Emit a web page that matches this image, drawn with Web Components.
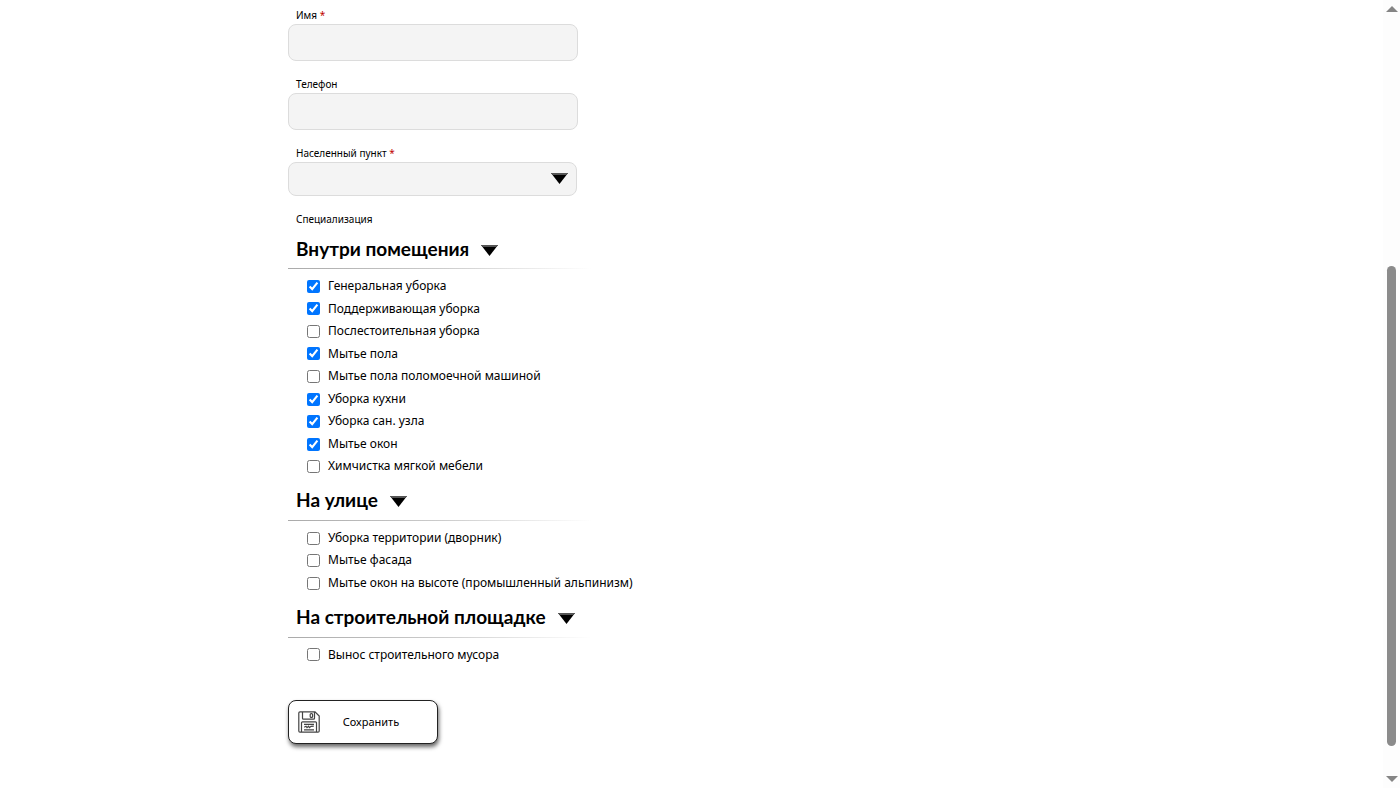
<!DOCTYPE html>
<html lang="ru">
<head>
<meta charset="utf-8">
<title>Анкета</title>
<style>
  html, body { margin: 0; height: 100%; background: #fff; }
  body { font-family: "Noto Sans", "Open Sans", sans-serif; color: #000; overflow: hidden; }
</style>
</head>
<body>
<app-page>
  <profile-form>
    <text-field required>Имя</text-field>
    <text-field>Телефон</text-field>
    <select-field required>Населенный пункт</select-field>
    <field-caption>Специализация</field-caption>
    <check-group heading="Внутри помещения">
      <check-item checked>Генеральная уборка</check-item>
      <check-item checked>Поддерживающая уборка</check-item>
      <check-item>Послестоительная уборка</check-item>
      <check-item checked>Мытье пола</check-item>
      <check-item>Мытье пола поломоечной машиной</check-item>
      <check-item checked>Уборка кухни</check-item>
      <check-item checked>Уборка сан. узла</check-item>
      <check-item checked>Мытье окон</check-item>
      <check-item>Химчистка мягкой мебели</check-item>
    </check-group>
    <check-group heading="На улице">
      <check-item>Уборка территории (дворник)</check-item>
      <check-item>Мытье фасада</check-item>
      <check-item>Мытье окон на высоте (промышленный альпинизм)</check-item>
    </check-group>
    <check-group heading="На строительной площадке">
      <check-item>Вынос строительного мусора</check-item>
    </check-group>
    <save-button>Сохранить</save-button>
  </profile-form>
  <scroll-rail slot="rail"></scroll-rail>
</app-page>

<script>
const define = (name, html, setup) => {
  const template = document.createElement('template');
  template.innerHTML = html;
  customElements.define(name, class extends HTMLElement {
    constructor() {
      super();
      this.attachShadow({ mode: 'open' }).append(template.content.cloneNode(true));
    }
    connectedCallback() { if (setup) setup(this, this.shadowRoot); }
  });
};

const arrow = `<svg class="arrow" width="17" height="11" viewBox="0 0 18 11" preserveAspectRatio="none" aria-hidden="true">
  <path d="M0 0H18L9 11Z" fill="#000"/><path d="M0 0H18L16 2H2Z" fill="#555"/></svg>`;

const markRequired = (host, root) => {
  root.querySelector('.star').hidden = !host.hasAttribute('required');
  root.querySelector('.control').required = host.hasAttribute('required');
};

const fieldStyle = `
  :host { display: block; }
  label { display: block; padding: 0 8px; font-size: 10px; line-height: 18px; }
  .star { color: #c00000; }
  .control { display: block; box-sizing: border-box; width: 100%; margin: 0; padding: 0 12px;
    border: 1px solid #dcdcdc; border-radius: 8px; background: #f4f4f4; font: inherit; font-size: 12px; }`;

define('app-page', `
  <style>
    :host { display: flex; height: 100vh; overflow: hidden; }
    main { flex: 1; min-width: 0; padding: 6px 20px 0 288px; }
  </style>
  <main><slot></slot></main>
  <slot name="rail"></slot>`);

define('profile-form', `
  <style>
    :host { display: block; max-width: 400px; }
    ::slotted(text-field) { margin-bottom: 14px; max-width: 290px; }
    ::slotted(select-field) { max-width: 289px; }
    ::slotted(field-caption) { margin-top: 14px; }
    ::slotted(save-button) { margin-top: 32px; }
  </style>
  <slot></slot>`);

define('text-field', `
  <style>${fieldStyle} .control { height: 37px; }</style>
  <label for="field"><slot></slot> <span class="star">*</span></label>
  <input class="control" id="field" type="text">`, markRequired);

define('select-field', `
  <style>${fieldStyle}
    .box { display: grid; align-items: center; }
    .box > * { grid-area: 1 / 1; }
    .control { height: 34px; appearance: none; }
    .arrow { justify-self: end; margin: 0 9px 2px 0; pointer-events: none; }
  </style>
  <label for="field"><slot></slot> <span class="star">*</span></label>
  <div class="box">
    <select class="control" id="field"><option value=""></option></select>
    ${arrow}
  </div>`, markRequired);

define('field-caption', `
  <style>:host { display: block; padding: 0 8px; font-size: 10px; line-height: 18px; }</style>
  <slot></slot>`);

define('check-group', `
  <style>
    :host { display: block; }
    h2 { margin: 0; max-width: 310px; padding-bottom: 1px;
      background: linear-gradient(90deg, #aaa, #ccc 50%, #fff 98%) bottom / 100% 1px no-repeat; }
    button { display: flex; align-items: center; gap: 12px; height: 40px; padding: 0 8px; border: 0;
      background: none; color: #000; font: 700 19px Lato, "Noto Sans", sans-serif; white-space: nowrap; cursor: pointer; }
    .arrow { margin-top: 4px; }
    .items { padding: 6px 0 2px 19px; }
    .items[hidden] { display: none; }
  </style>
  <h2><button type="button" aria-expanded="true"><span></span>${arrow}</button></h2>
  <div class="items" role="group"><slot></slot></div>`, (host, root) => {
    const button = root.querySelector('button');
    const items = root.querySelector('.items');
    root.querySelector('span').textContent = host.getAttribute('heading');
    items.setAttribute('aria-label', host.getAttribute('heading'));
    button.onclick = () => {
      items.hidden = !items.hidden;
      button.setAttribute('aria-expanded', String(!items.hidden));
    };
  });

define('check-item', `
  <style>
    :host { display: block; font-size: 12px; line-height: 1.88; white-space: nowrap; }
    label { display: flex; align-items: center; gap: 8px; }
    input { width: 13px; height: 13px; margin: 0; }
  </style>
  <label><input type="checkbox"><span><slot></slot></span></label>`, (host, root) => {
    root.querySelector('input').checked = host.hasAttribute('checked');
  });

define('save-button', `
  <style>
    :host { display: block; }
    button { display: grid; grid-template-columns: 22px 1fr; align-items: center; width: 150px; height: 44px;
      padding: 0 9px; border: 1px solid #222; border-radius: 8px; background: #fff; color: #000;
      box-shadow: 1px 3px 4px rgba(0, 0, 0, .6); font: inherit; font-size: 11px; text-align: center; cursor: pointer; }
    span { padding: 0 6px 2px 0; }
  </style>
  <button type="button">
    <svg width="22" height="22" viewBox="0 0 22 22" fill="none" stroke="#444" stroke-width="1.2" aria-hidden="true">
      <path d="M2 .8H17L21.2 5V20Q21.2 21.2 20 21.2H2Q.8 21.2 .8 20V2Q.8 .8 2 .8Z"/>
      <path d="M4.5 1V7.2Q4.5 8.2 5.5 8.2H15.5Q16.5 8.2 16.5 7.2V1"/>
      <rect x="12.2" y="2.6" width="2.4" height="3.8" rx="1"/>
      <path d="M3.5 21V11.8Q3.5 10.8 4.5 10.8H17.5Q18.5 10.8 18.5 11.8V21M6 13.4H16M6 18.8H16"/>
      <path d="M6.2 16.2L8 15.2L9 16.6L10.5 15.2L11.5 16.6L13 15.4L15.8 15.2"/>
    </svg>
    <span><slot></slot></span>
  </button>`);

define('scroll-rail', `
  <style>
    :host { display: grid; grid-template-rows: 6px 254fr 480fr 30fr 6px; justify-items: center; box-sizing: border-box;
      width: 17px; height: 100%; padding: 6px 0; background: #fdfdfd; }
    .thumb { grid-row: 3; width: 9px; border-radius: 5px; background: #8b8b8b; }
    .down { grid-row: 5; }
  </style>
  <svg width="12" height="6" viewBox="0 0 12 6" aria-hidden="true"><path d="M0 6L6 0L12 6Z" fill="#858585"/></svg>
  <div class="thumb"></div>
  <svg class="down" width="12" height="6" viewBox="0 0 12 6" aria-hidden="true"><path d="M0 0L6 6L12 0Z" fill="#858585"/></svg>`);
</script>
</body>
</html>
